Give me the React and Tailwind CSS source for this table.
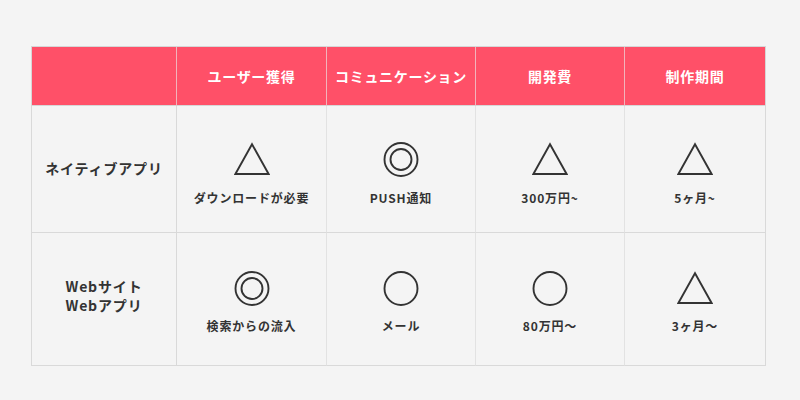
import React from "react";

const font = { fontFamily: '"Noto Sans CJK JP", "Noto Sans", sans-serif' };

function Triangle() {
  return (
    <svg width="36" height="36" viewBox="0 0 36 36" fill="none">
      <polygon points="18,2.2 1.4,32 34.6,32" stroke="#333" strokeWidth="1.9" fill="none" strokeLinejoin="miter" />
    </svg>
  );
}
function Circle() {
  return (
    <svg width="36" height="36" viewBox="0 0 36 36" fill="none">
      <circle cx="18" cy="17.5" r="16.5" stroke="#333" strokeWidth="1.9" />
    </svg>
  );
}
function Double() {
  return (
    <svg width="36" height="36" viewBox="0 0 36 36" fill="none">
      <circle cx="18" cy="17.5" r="16.5" stroke="#333" strokeWidth="1.9" />
      <circle cx="18" cy="17.5" r="10.5" stroke="#333" strokeWidth="1.9" />
    </svg>
  );
}

const icons = { t: Triangle, c: Circle, d: Double };

const rows = [
  {
    label: ["ネイティブアプリ"],
    h: "h-[127px]",
    lp: "pb-[2px]",
    pt: "pt-[36px] gap-[11px]",
    cells: [
      ["t", "ダウンロードが必要"],
      ["d", "PUSH通知"],
      ["t", "300万円~"],
      ["t", "5ヶ月~"],
    ],
  },
  {
    label: ["Webサイト", "Webアプリ"],
    h: "h-[133px]",
    lp: "pb-[6px]",
    pt: "pt-[38px] gap-[10px]",
    cells: [
      ["d", "検索からの流入"],
      ["c", "メール"],
      ["c", "80万円〜"],
      ["t", "3ヶ月〜"],
    ],
  },
];

const headers = ["ユーザー獲得", "コミュニケーション", "開発費", "制作期間"];

export default function App() {
  return (
    <div className="w-[800px] h-[400px] bg-[#f4f4f4] pt-[46px] pl-[31px]" style={font}>
      <div className="grid grid-cols-[146px_150px_149px_149px_141px] w-[735px] border-t border-[#d6d6d6]">
        <div className="h-[59px] bg-[#ff5068] border-l border-r border-b border-l-[#d6d6d6] border-r-[#f2b3bb] border-b-[#d6d6d6]" />
        {headers.map((h, i) => (
          <div
            key={h}
            className={`h-[59px] bg-[#ff5068] border-b border-b-[#d6d6d6] border-r flex items-center justify-center text-white font-bold text-[14px] tracking-[0.05em] leading-none ${i === 3 ? "border-r-[#d6d6d6]" : "border-r-[#f2b3bb]"}`}
          >
            {h}
          </div>
        ))}
        {rows.map((r, ri) => (
          <React.Fragment key={ri}>
            <div className={`${r.h} border-l border-r border-b border-[#d9d9d9] flex flex-col items-center justify-center text-[#333] font-bold text-[14px] tracking-[0.06em] leading-[19px] ${r.lp}`}>
              {r.label.map((l) => (
                <div key={l}>{l}</div>
              ))}
            </div>
            {r.cells.map(([ic, txt], ci) => {
              const Icon = icons[ic];
              return (
                <div
                  key={ci}
                  className={`${r.h} border-r border-b ${ci === 3 ? "border-r-[#d9d9d9]" : "border-r-[#e2e2e2]"} border-b-[#d9d9d9] flex flex-col items-center ${r.pt}`}
                >
                  <Icon />
                  <div className="text-[#333] font-bold text-[12px] tracking-[0.07em] leading-[18px]">{txt}</div>
                </div>
              );
            })}
          </React.Fragment>
        ))}
      </div>
    </div>
  );
}
